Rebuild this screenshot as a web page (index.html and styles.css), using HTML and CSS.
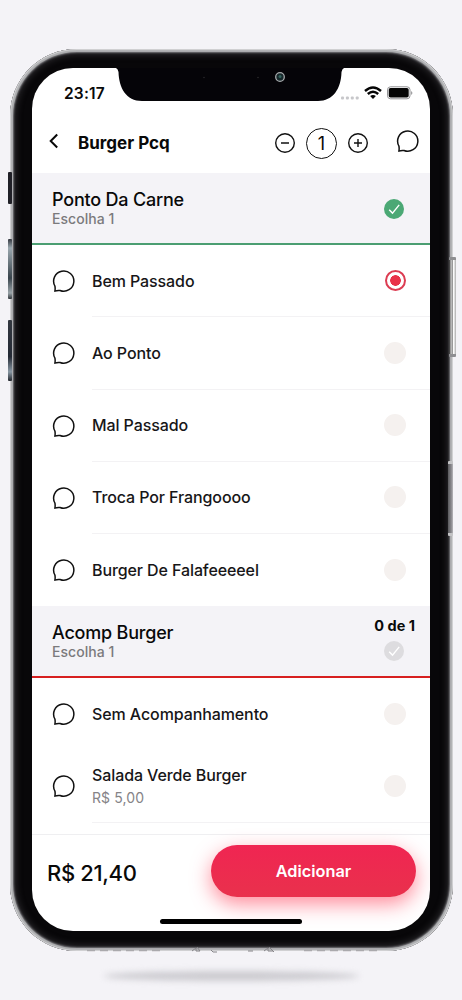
FILE: index.html
```html
<!DOCTYPE html>
<html lang="pt-BR">
<head>
<meta charset="utf-8">
<title>Burger Pcq</title>
<link rel="stylesheet" href="styles.css">
</head>
<body>
<svg class="defs" aria-hidden="true">
  <symbol id="bubble" viewBox="0 0 24 24"><path d="M2.9 22.1Q3.400 19.500 2.900 17A10.100 10.100 0 1 1 8 21.500Q5.400 21.100 2.900 22.100Z" fill="none" stroke="#111" stroke-width="1.5" stroke-linejoin="round"/></symbol>
  <symbol id="check" viewBox="0 0 20 20"><circle cx="10" cy="10" r="10" fill="currentColor"/><path d="M5.2 10.7 8.5 14.1 15.2 5.9" fill="none" stroke="#fff" stroke-width="1.4"/></symbol>
</svg>
<div class="phone">
  <i class="side-button mute"></i>
  <i class="side-button volume-up"></i>
  <i class="side-button volume-down"></i>
  <i class="side-button power"></i>
  <i class="side-button tray"></i>
  <svg class="bottom-ports" viewBox="0 0 380 6">
    <g stroke="#aaa9ac" stroke-width="1.4" stroke-dasharray="8 5"><path d="M47 3.5H122M264 3.5H338"/></g>
    <g fill="none" stroke="#858488" stroke-width="1"><path d="M152 4l4-3v3h4l-3-4M171 3l2 2h4M208 4h5M224 4l4-3v3h5l-4-4 5 5"/></g>
  </svg>
  <div class="screen">
    <svg class="notch" viewBox="0 0 228 34">
      <path d="M0 0Q2 1 2.500 4C3 20 10 33 26 33H202C217 33 225 21 225.500 4Q226 1 228 0Z" fill="#050408"/>
      <circle cx="164" cy="9" r="4.300" fill="#17282b" stroke="#a6a9ab" stroke-width="1.300"/>
      <circle cx="164" cy="8.500" r="1.500" fill="#32635c"/>
      <circle cx="88" cy="9.500" r=".8" fill="#29282c"/>
      <circle cx="142" cy="9.500" r=".7" fill="#333"/>
    </svg>
    <header class="top">
      <div class="status">
        <span class="time">23:17</span>
        <svg class="signals" viewBox="0 0 74 16">
          <g fill="#c7c7ca"><rect x="0" y="10.500" width="3" height="3" rx="1"/><rect x="4.900" y="10.500" width="3" height="3" rx="1"/><rect x="9.800" y="10.500" width="3" height="3" rx="1"/><rect x="14.700" y="10.500" width="3" height="3" rx="1"/></g>
          <g transform="translate(0 -1)"><g fill="none" stroke="#050505" stroke-width="2.400"><path d="M24 6Q32 -1 40 6M26.800 9Q32 4.300 37.200 9"/></g><path d="M29.100 11.100Q32 8.900 34.900 11.100L32 14Z" fill="#050505"/>
          <rect x="46.500" y="1.800" width="22.500" height="12" rx="3" fill="none" stroke="#939396"/><rect x="47.700" y="3" width="20" height="9.600" rx="1.800" fill="#050505"/><path d="M70.300 6q2 2 0 4z" fill="#77777a"/></g>
        </svg>
      </div>
      <div class="titlebar">
        <svg class="back" viewBox="0 0 12 16"><path d="M9.200 1.500 2.700 8l6.500 6.500" fill="none" stroke="#080808" stroke-width="2"/></svg>
        <h1 class="title">Burger Pcq</h1>
        <svg class="round" viewBox="0 0 20 20"><circle cx="10" cy="10" r="9.300"/><path d="M6 10h8"/></svg>
        <span class="quantity">1</span>
        <svg class="round" viewBox="0 0 20 20"><circle cx="10" cy="10" r="9.300"/><path d="M6 10h8M10 6v8"/></svg>
        <svg class="bubble top-bubble"><use href="#bubble"/></svg>
      </div>
    </header>
    <main class="menu">
      <section>
        <div class="group done"><div><h2 class="group-name">Ponto Da Carne</h2><p class="hint">Escolha 1</p></div><svg class="check"><use href="#check"/></svg></div>
        <div class="option"><svg class="bubble"><use href="#bubble"/></svg><div class="cell lined"><span class="name">Bem Passado</span><i class="radio selected"></i></div></div>
        <div class="option"><svg class="bubble"><use href="#bubble"/></svg><div class="cell lined"><span class="name">Ao Ponto</span><i class="radio"></i></div></div>
        <div class="option"><svg class="bubble"><use href="#bubble"/></svg><div class="cell lined"><span class="name">Mal Passado</span><i class="radio"></i></div></div>
        <div class="option"><svg class="bubble"><use href="#bubble"/></svg><div class="cell lined"><span class="name">Troca Por Frangoooo</span><i class="radio"></i></div></div>
        <div class="option"><svg class="bubble"><use href="#bubble"/></svg><div class="cell"><span class="name">Burger De Falafeeeeel</span><i class="radio"></i></div></div>
      </section>
      <section>
        <div class="group pending"><div><h2 class="group-name">Acomp Burger</h2><p class="hint">Escolha 1</p></div><div class="progress"><span>0 de 1</span><svg class="check"><use href="#check"/></svg></div></div>
        <div class="option"><svg class="bubble"><use href="#bubble"/></svg><div class="cell"><span class="name">Sem Acompanhamento</span><i class="radio"></i></div></div>
        <div class="option"><svg class="bubble"><use href="#bubble"/></svg><div class="cell lined"><div class="details"><span class="name">Salada Verde Burger</span><span class="price">R$ 5,00</span></div><i class="radio"></i></div></div>
      </section>
    </main>
    <footer class="checkout"><div class="checkout-row"><strong class="total">R$ 21,40</strong><button class="add">Adicionar</button></div><div class="home"></div></footer>
  </div>
</div>
<div class="shadow"></div>
</body>
</html>
```
FILE: styles.css
```css
* { box-sizing: border-box; }
body { margin: 0; height: 1000px; padding-top: 49px; overflow: hidden; background: #f4f3f7; color: #090909; font-family: Inter, "Liberation Sans", sans-serif; }
.defs { position: absolute; width: 0; height: 0; }
h1, h2, p { margin: 0; }
.phone { position: relative; width: 443px; height: 902px; margin-left: 10px; padding: 19px 23px 20px 22px; border-radius: 67px; background: #080709; box-shadow: inset 0 0 0 1px #d0d0d2, inset 0 0 1px 3px #b2b3b5, inset 0 0 2px 4px #68676b, inset 0 0 6px 6px #28272a; }
.screen { position: relative; width: 398px; height: 863px; overflow: hidden; display: flex; flex-direction: column; border-radius: 41px; background: #fff; }
.side-button { position: absolute; border-radius: 1px; }
.mute { left: -2px; top: 123px; width: 4px; height: 32px; background: #202027; }
.volume-up { left: -2px; top: 190px; width: 4px; height: 60px; background: linear-gradient(#343840, #9ba8af 15%, #39444c 65%, #9aa4a9 90%, #30353b); }
.volume-down { left: -2px; top: 271px; width: 4px; height: 61px; background: linear-gradient(#333840, #242a35 60%, #8998a4 85%, #22262d); }
.power { right: -3px; top: 208px; width: 7px; height: 100px; background: linear-gradient(90deg, #444 15%, #eee 28%, #777 45%, #fff 65%, #aaa); border-top: 3px solid #8e8e91; border-bottom: 3px solid #8e8e91; }
.tray { right: 0; top: 412px; width: 5px; height: 75px; background: linear-gradient(90deg, #59595c, #8a898e 65%, #b8b7bb); border-top: 3px solid #c3c3c5; border-bottom: 3px solid #c3c3c5; }
.bottom-ports { position: absolute; bottom: -2px; left: 30px; width: 380px; height: 6px; }
.notch { position: absolute; left: 84px; top: 0; width: 228px; height: 34px; }
.top { height: 105.4px; flex: none; }
.status { height: 50px; display: flex; justify-content: space-between; align-items: center; padding: 1px 15px 0 32px; }
.time { font-size: 15.5px; line-height: 20px; font-weight: 600; letter-spacing: .2px; }
.signals { width: 74px; height: 16px; }
.titlebar { height: 50px; display: flex; align-items: center; padding: 0 10px 0 16px; }
.back { width: 12px; height: 16px; margin-top: -4px; }
.title { flex: 1; margin-left: 18px; font-size: 17px; line-height: 22px; font-weight: 700; }
.round { width: 20px; height: 20px; fill: none; stroke: #111; stroke-width: 1.4; }
.quantity { width: 31px; height: 31px; margin: 0 11px; border: 1.5px solid #111; border-radius: 50%; text-align: center; font-size: 18px; line-height: 29px; }
.bubble { flex: none; width: 24px; height: 24px; }
.top-bubble { margin: -5px 0 0 28px; }
.menu { height: 660.6px; flex: none; overflow: hidden; }
.group { height: 71.8px; padding: 0 20px; display: flex; justify-content: space-between; background: #f4f3f7; border-bottom: 2px solid #4b9e72; }
.group-name { margin-top: 16px; font-size: 18px; line-height: 21px; font-weight: 500; letter-spacing: -.2px; }
.hint { font-size: 14px; line-height: 17px; font-weight: 500; color: #7b7a7d; letter-spacing: .05px; }
.check { width: 20px; height: 20px; }
.done .check { margin: 25.6px 6px 0 0; color: #4ba875; }
.pending { height: 72px; border-bottom-color: #d71f20; }
.progress { margin: 11px -5px 0 0; display: flex; flex-direction: column; align-items: flex-end; font-size: 14.5px; line-height: 18px; font-weight: 700; }
.progress .check { margin: 6px 11px 0 0; color: #dddcdf; }
.option { height: 72.2px; display: flex; align-items: center; padding-left: 20px; }
.cell { flex: 1; height: 100%; margin-left: 16px; padding-right: 24px; display: flex; align-items: center; justify-content: space-between; }
.lined { border-bottom: 1px solid #f3f2f4; }
.name { font-size: 16px; line-height: 22px; font-weight: 500; letter-spacing: -.1px; color: #171618; }
.radio { width: 22px; height: 22px; flex: none; border-radius: 50%; background: #f5f1ef; }
.selected { width: 21px; height: 21px; border: 2px solid #dc3c52; background: radial-gradient(circle, #e93249 0 5px, #fff 5.6px); }
.details { display: flex; flex-direction: column; gap: 1px; padding-top: 1px; }
.price { font-size: 14px; line-height: 22px; color: #858387; letter-spacing: .1px; }
.checkout { flex: 1; border-top: 1px solid #efeff1; }
.checkout-row { display: flex; justify-content: space-between; padding: 10px 14px 0 15px; }
.total { padding-top: 13px; font-size: 22px; line-height: 30px; font-weight: 500; letter-spacing: -.35px; }
.add { width: 205px; height: 52px; padding: 0; border: 0; border-radius: 26px; color: #fff; background: linear-gradient(#f02552, #e9314c); box-shadow: 0 7px 20px #ff4e66a6; font: 600 16.3px/52px Inter, "Liberation Sans", sans-serif; }
.home { position: relative; width: 142px; height: 5px; margin: 22px auto 0; border-radius: 3px; background: #000; }
.shadow { width: 255px; height: 10px; margin: 20px 0 0 104px; border-radius: 50%; background: #cccbd0; filter: blur(3px); }
```
